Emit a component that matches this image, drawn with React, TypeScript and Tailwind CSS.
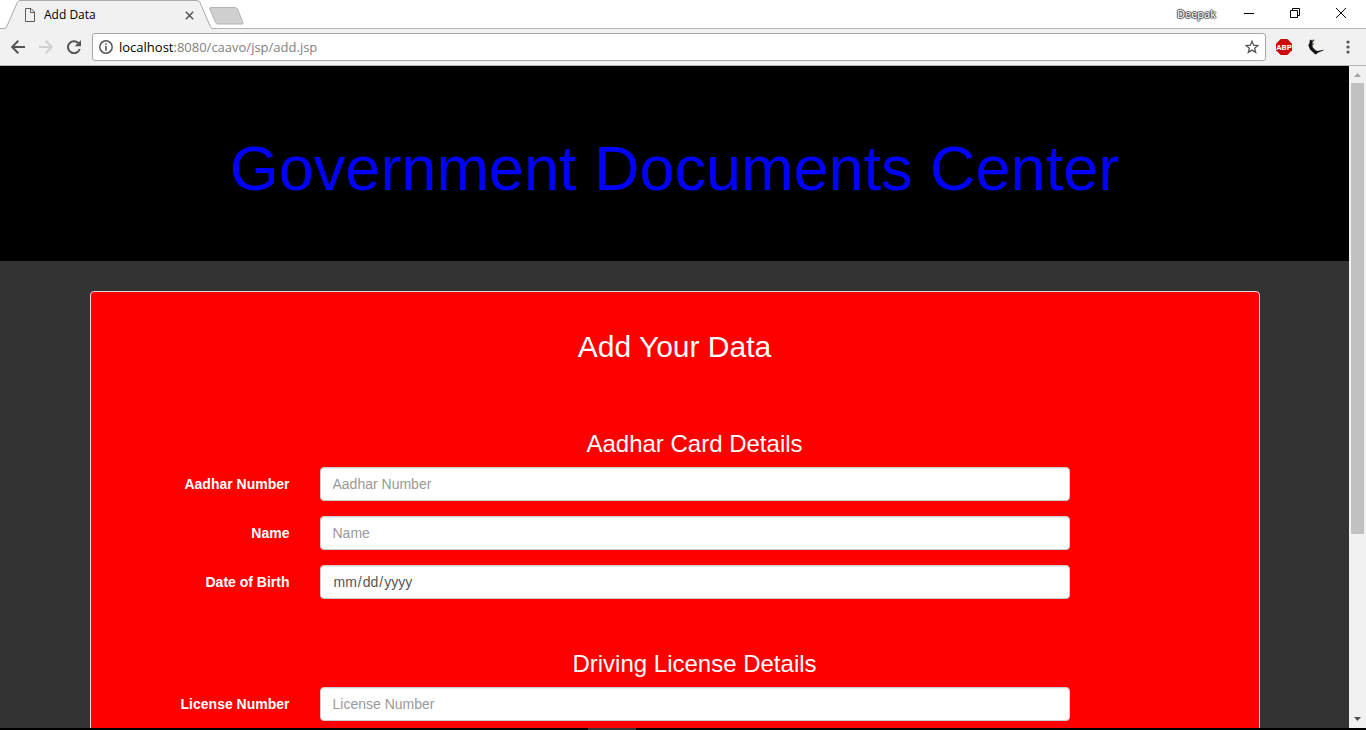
import type { ReactNode } from "react";

function TabStrip() {
  return (
    <header className="flex h-7 shrink-0 items-start justify-between bg-white">
      <div className="flex items-start">
        <div className="relative z-10 flex h-7 w-[213px] items-center pr-[17px] pl-6">
          <svg className="absolute top-0 left-0" width="216" height="29" viewBox="0 0 216 29" aria-hidden="true">
            <path d="M0 29 V28.5 H4.5 Q6 28.5 7 26 L17.500 2 Q18.500 .5 20 .5 H197 Q199 .5 200 2.500 L210 26 Q211 28.500 213 28.500 H216 V29Z" fill="#f1f1f1" />
            <path d="M0 28.500 H4.500 Q6 28.500 7 26 L17.500 2 Q18.500 .5 20 .5 H197 Q199 .5 200 2.500 L210 26 Q211 28.500 213 28.500 H216" fill="none" stroke="#a9a9a9" />
          </svg>
          <svg className="relative mt-0.5" width="12" height="14" viewBox="0 0 12 14" fill="none" stroke="#5a5a5a" aria-hidden="true">
            <path d="M1.500 .5 H7 L10.500 4 V13.500 H1.500Z M6.500 .5 V4.500 H10.500" />
          </svg>
          <span className="relative mt-0.5 ml-2 flex-1 font-['Open_Sans','Noto_Sans',sans-serif] text-xs text-black">Add Data</span>
          <button aria-label="Close tab" className="relative mt-0.5 mr-0.5">
            <svg width="9" height="9" viewBox="0 0 9 9" stroke="#555" strokeWidth="1.5">
              <path d="M.8 .8 L8.200 8.200 M8.200 .8 L.8 8.200" />
            </svg>
          </button>
        </div>
        <button aria-label="New tab" className="-ml-1 pt-[7px]">
          <svg width="35" height="18" viewBox="0 0 35 18">
            <path d="M2 .5 H26 Q27.500 .5 28.500 2 L34 15.500 Q34.500 17 33 17 H9 Q7.500 17 6.500 15.500 L.8 2 Q.2 .5 2 .5Z" fill="#cfcfcf" stroke="#b4b4b4" />
          </svg>
        </button>
      </div>
      <div className="flex h-[26px] items-center pr-5">
        <span className="mr-7 pt-0.5 font-['Open_Sans',sans-serif] text-[11px] text-white [text-shadow:1px_0_1px_#444,-1px_0_1px_#444,0_1px_1px_#444,0_-1px_1px_#444]">Deepak</span>
        <button aria-label="Minimize">
          <svg width="10" height="10" viewBox="0 0 10 10" stroke="#000"><path d="M0 5.500 H10" /></svg>
        </button>
        <button aria-label="Restore" className="ml-9">
          <svg width="10" height="10" viewBox="0 0 10 10" fill="none" stroke="#000"><path d="M.5 2.500 H7.500 V9.500 H.5Z M2.500 2.500 V.5 H9.500 V7.500 H7.500" /></svg>
        </button>
        <button aria-label="Close" className="ml-9">
          <svg width="10" height="10" viewBox="0 0 10 10" stroke="#000"><path d="M0 0 L10 10 M10 0 L0 10" /></svg>
        </button>
      </div>
    </header>
  );
}

function Toolbar() {
  return (
    <nav className="flex h-[38px] shrink-0 items-center border-t border-b border-[#b6b6b6] bg-[#f1f1f1] pr-[13px] pl-[11px]">
      <button aria-label="Back">
        <svg width="14" height="14" viewBox="0 0 14 14" fill="none" stroke="#555" strokeWidth="2"><path d="M14 7 H1.500 M7.300 .8 L1.200 7 L7.300 13.200" /></svg>
      </button>
      <button aria-label="Forward" className="ml-3.5">
        <svg width="14" height="14" viewBox="0 0 14 14" fill="none" stroke="#d0d0d0" strokeWidth="2"><path d="M0 7 H12.500 M6.700 .8 L12.800 7 L6.700 13.200" /></svg>
      </button>
      <button aria-label="Reload" className="ml-3.5">
        <svg width="14" height="14" viewBox="0 0 14 14">
          <path d="M11.300 3 A6 6 0 1 0 12.700 9" fill="none" stroke="#555" strokeWidth="2" />
          <path d="M14 0 V6.300 H7.700Z" fill="#555" />
        </svg>
      </button>
      <div className="ml-[11px] flex h-7 flex-1 items-center rounded-[3px] border border-[#a6a6a6] bg-white pr-1.5 pl-1.5">
        <svg width="14" height="14" viewBox="0 0 14 14" aria-hidden="true">
          <circle cx="7" cy="7" r="6.200" fill="none" stroke="#555" strokeWidth="1.500" />
          <path d="M6.200 3.200 H7.800 V4.800 H6.200Z M6.200 6 H7.800 V10.800 H6.200Z" fill="#555" />
        </svg>
        <p className="ml-[6px] flex-1 font-['Open_Sans',sans-serif] text-[13px] leading-5 text-[#808080]">
          <span className="text-black">localhost</span>:8080/caavo/jsp/add.jsp
        </p>
        <button aria-label="Bookmark this page">
          <svg width="14" height="14" viewBox="0 0 14 14" fill="none" stroke="#555" strokeWidth="1.300"><path d="M7 1.300 L8.600 5.200 L12.900 5.500 L9.600 8.200 L10.700 12.400 L7 10.100 L3.300 12.400 L4.400 8.200 L1.100 5.500 L5.400 5.200Z" /></svg>
        </button>
      </div>
      <button aria-label="Adblock Plus" className="ml-2.5">
        <svg width="16" height="16" viewBox="0 0 16 16">
          <path d="M4.700 0 H11.300 L16 4.700 V11.300 L11.300 16 H4.700 L0 11.300 V4.700Z" fill="#cc0808" />
          <text x="8" y="11" textAnchor="middle" fontFamily="Roboto, sans-serif" fontSize="8" fontWeight="700" fill="#fff">ABP</text>
        </svg>
      </button>
      <button aria-label="Extension" className="ml-4">
        <svg width="16" height="16" viewBox="0 0 16 16">
          <path d="M2 .5 L4 1.600 L6.300 .8 L6 2 L4.500 3 L4.300 4.500 L6 4.800 L4.400 6 L4.800 8.500 L7.500 11.200 L9.500 12 L12 11.500 L15.800 10.700 L15 11.800 L11.500 12.900 L9.500 14 L8.200 15.500 L6.500 14.800 L4.500 12.800 L2 10.500 L.8 7.500 L.3 5.500 L1.300 5 L1.500 3Z" fill="#151311" />
          <path d="M4 1.500 L6 .8 M4.500 5.300 L6 5" stroke="#8b7d67" />
        </svg>
      </button>
      <button aria-label="Menu" className="ml-[19px]">
        <svg width="10" height="14" viewBox="0 0 10 14" fill="#555"><circle cx="5" cy="2" r="1.600" /><circle cx="5" cy="7" r="1.600" /><circle cx="5" cy="12" r="1.600" /></svg>
      </button>
    </nav>
  );
}

function Field({ id, label, type = "text" }: { id: string; label: string; type?: string }) {
  return (
    <div className="mb-[15px] grid grid-cols-12">
      <label htmlFor={id} className="col-span-2 px-[15px] pt-[7px] text-right text-sm leading-5 font-bold text-white">
        {label}
      </label>
      <div className="col-span-8 px-[15px]">
        <input
          id={id}
          type={type}
          placeholder={label}
          className="block h-[34px] w-full rounded-sm border border-[#ccc] bg-white px-3 text-sm leading-5 text-[#555] shadow-[inset_0_1px_1px_rgba(0,0,0,0.075)] placeholder:text-[#999] [&::-webkit-calendar-picker-indicator]:hidden"
        />
      </div>
    </div>
  );
}

function Section({ title, children }: { title: string; children: ReactNode }) {
  return (
    <section className="mb-[52px]">
      <h3 className="mb-2.5 text-center text-2xl leading-[26px] text-white">{title}</h3>
      {children}
    </section>
  );
}

function Scrollbar() {
  return (
    <div className="flex w-[17px] shrink-0 flex-col items-center bg-[#f1f1f1]" aria-hidden="true">
      <svg width="17" height="17" viewBox="0 0 17 17"><path d="M5 11 L8.500 7 L12 11Z" fill="#a3a3a3" /></svg>
      <div className="flex w-full flex-1 flex-col px-0.5">
        <div className="w-[13px] flex-[451] bg-[#c1c1c1]" />
        <div className="flex-[177]" />
      </div>
      <svg width="17" height="17" viewBox="0 0 17 17"><path d="M5 6 H12 L8.500 10Z" fill="#505050" /></svg>
    </div>
  );
}

export default function App() {
  return (
    <div className="flex h-screen flex-col overflow-hidden bg-black">
      <TabStrip />
      <Toolbar />
      <div className="flex min-h-0 flex-1">
        <main className="min-w-0 flex-1 overflow-hidden bg-[#333] font-['Liberation_Sans',Arial,sans-serif]">
          <div className="mb-[30px] bg-black pt-[68px] pb-[58px]">
            <h1 className="text-center text-[63px] leading-[69px] text-[#0000ff]">Government Documents Center</h1>
          </div>
          <div className="mx-auto max-w-[1170px] rounded-sm border border-[#ddd] bg-[#ff0000] pt-[38px] pb-8">
            <h2 className="mb-[68px] text-center text-3xl leading-[33px] text-white">Add Your Data</h2>
            <form className="-mr-[21px] ml-[19px]">
              <Section title="Aadhar Card Details">
                <Field id="aadhar-number" label="Aadhar Number" />
                <Field id="name" label="Name" />
                <Field id="birth-date" label="Date of Birth" type="date" />
              </Section>
              <Section title="Driving License Details">
                <Field id="license-number" label="License Number" />
              </Section>
            </form>
          </div>
        </main>
        <Scrollbar />
      </div>
      <footer className="flex h-0.5 shrink-0 justify-center bg-black pr-[143px]">
        <div className="w-12 bg-[#333]" />
      </footer>
    </div>
  );
}
